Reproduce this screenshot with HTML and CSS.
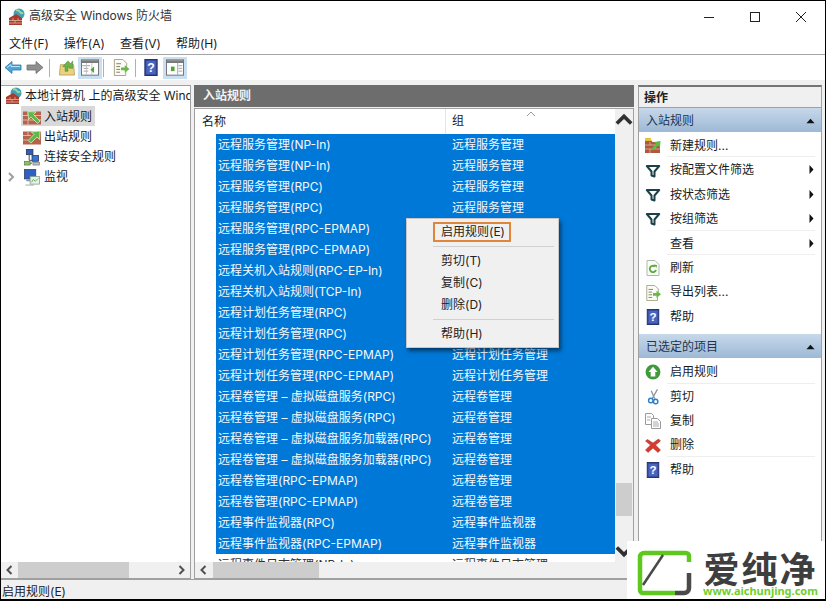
FILE: index.html
```html
<!DOCTYPE html>
<html lang="zh-CN">
<head>
<meta charset="utf-8">
<title>高级安全 Windows 防火墙</title>
<link rel="stylesheet" href="styles.css">
</head>
<body>
<svg class="sprite" width="0" height="0" aria-hidden="true">
  <defs>
    <symbol id="i-shield" viewBox="0 0 18 18">
      <circle cx="11" cy="6" r="5.5" fill="#3f9fb5"/>
      <path d="M8 2.500c2-1 3 0 4 1.500s2 1.500 3 .5" fill="none" stroke="#9fd69a" stroke-width="2"/>
      <path d="M1 10l7-4 6 4v7H1z" fill="#a83c2c"/>
      <path d="M1 12.500h13M1 15h13M5 10v2.500M10 10v2.500M7 12.500V15" stroke="#e3b5a5" stroke-width=".8" fill="none"/>
    </symbol>
    <symbol id="i-rule-in" viewBox="0 0 18 16">
      <rect x="0" y="2" width="18" height="13" fill="#b5634c"/>
      <path d="M0 6h18M0 10.500h18M5 2v4M12 6v4.500M5 10.500V15" stroke="#dcb7a2" stroke-width="1" fill="none"/>
      <path d="M14.500 14L8 7.500 5.500 10 5 2l8 .5-2.500 2.500 6.500 6.500z" fill="#5cbb45" stroke="#e8f5df" stroke-width=".7"/>
    </symbol>
    <symbol id="i-rule-out" viewBox="0 0 18 16">
      <rect x="0" y="2" width="18" height="13" fill="#b5634c"/>
      <path d="M5 11l6-6-2.500-2.500L17 1.500 16.500 10 14 7.500l-6 6z" fill="#5cbb45" stroke="#e8f5df" stroke-width=".7"/>
      <path d="M0 6h8M0 10.500h5M5 2v4" stroke="#dcb7a2" stroke-width="1" fill="none"/>
    </symbol>
    <symbol id="i-conn" viewBox="0 0 18 18">
      <rect x="3" y="0" width="7" height="6" fill="#2f5fb5" stroke="#26305f" stroke-width=".8"/>
      <rect x="9" y="7" width="7" height="6" fill="#3476d0" stroke="#26305f" stroke-width=".8"/>
      <path d="M6 6v6h3M3 15h6" stroke="#444" fill="none"/>
      <rect x="1" y="13" width="6" height="4" fill="#8ac06c" stroke="#587a3a" stroke-width=".7"/>
      <rect x="10" y="14" width="7" height="3" fill="#bcbcbc" stroke="#777" stroke-width=".7"/>
    </symbol>
    <symbol id="i-monitor" viewBox="0 0 18 18">
      <rect x="1" y="0.500" width="12" height="10" fill="#2f5fc0" stroke="#333d66" stroke-width=".8"/>
      <path d="M3 11h8v2H3z" fill="#8a93a8"/>
      <rect x="7" y="8" width="10" height="8" fill="#e7eef0" stroke="#7f9c80" stroke-width=".8"/>
      <path d="M8.500 14l2-3 2 2 3-3" fill="none" stroke="#5cab50"/>
      <path d="M2 17h9" stroke="#9aa" stroke-width="1"/>
    </symbol>
    <symbol id="i-back" viewBox="0 0 18 16">
      <path d="M1 8l7-6v3.500h9v5H8V14z" fill="#4aa6dc" stroke="#2b78a8" stroke-width=".8"/>
      <path d="M3 8l4-3v2h9" fill="none" stroke="#b7e4f7" stroke-width="1"/>
    </symbol>
    <symbol id="i-forward" viewBox="0 0 18 16">
      <path d="M17 8l-7-6v3.500H1v5h9V14z" fill="#8f8f8f" stroke="#6e6e6e" stroke-width=".8"/>
    </symbol>
    <symbol id="i-up" viewBox="0 0 18 18">
      <path d="M2 6h14l1 11H1z" fill="#ecd27e" stroke="#b09748" stroke-width=".8"/>
      <path d="M7 13V8H4.500L10 2l3 3 2-3v8l-4-.5 1-1-2-.5v5z" fill="#69b54a" stroke="#3e7a2a" stroke-width=".5"/>
    </symbol>
    <symbol id="i-pane-left" viewBox="0 0 20 18">
      <rect x=".5" y=".5" width="19" height="17" fill="#fdfdfd" stroke="#6a6a6a"/>
      <rect x="1" y="1" width="18" height="3" fill="#7a7a7a"/>
      <path d="M1 7h9M3 10h5M3 13h5" stroke="#9a9a9a"/>
      <path d="M6 4v13M12 4v13" stroke="#c2c2c2"/>
      <path d="M14.500 8v7L10.500 11.500z" fill="#4fa23a"/>
    </symbol>
    <symbol id="i-pane-right" viewBox="0 0 20 18">
      <rect x=".5" y=".5" width="19" height="17" fill="#fdfdfd" stroke="#6a6a6a"/>
      <rect x="1" y="1" width="18" height="3" fill="#7a7a7a"/>
      <path d="M13 4v13M14 7h4M14 10h4M14 13h4" stroke="#9a9a9a"/>
      <rect x="5.500" y="8" width="4" height="5" fill="#4fa23a"/>
    </symbol>
    <symbol id="i-export" viewBox="0 0 18 18">
      <path d="M2 .5h9l4 4V8h-1v9.500H2z" fill="#fbfbf5" stroke="#a49f7c"/>
      <path d="M4 5h5M4 8h4M4 11h4M4 14h4" stroke="#7a7a5c"/>
      <path d="M9 9h4V6.500L18 10.500 13 14.500V12H9z" fill="#64ba44"/>
    </symbol>
    <symbol id="i-help" viewBox="0 0 14 18">
      <rect x=".5" y=".5" width="13" height="17" fill="#33489c" stroke="#1e2c68"/>
      <rect x="2" y="2" width="10" height="14" fill="#4a64c0"/>
      <text x="7" y="14" text-anchor="middle" class="help-mark">?</text>
    </symbol>
    <symbol id="i-new" viewBox="0 0 16 16">
      <path d="M0 2h6l1.500 2H15v11H0z" fill="#b3563f"/>
      <path d="M0 7h15M0 11h15M5 4v3M10 7v4M5 11v4" stroke="#dcb7a2" stroke-width=".8"/>
      <rect x="0" y="0" width="6" height="3" fill="#e6c23c"/>
      <path d="M6 11l5-5-2-2 6.500-1L15 9.500l-2-2-5 5z" fill="#5cbb45"/>
    </symbol>
    <symbol id="i-filter" viewBox="-1 -2 16 16">
      <path d="M.8 1h12.400L8.500 6.500v5L5.500 10.500v-4z" fill="#fff" stroke="#1c4148" stroke-width="2" stroke-linejoin="round"/>
    </symbol>
    <symbol id="i-refresh" viewBox="0 0 14 16">
      <path d="M1 .5h8l4 4v11H1z" fill="#fafcf8" stroke="#aeb9a8"/>
      <path d="M10 10a3.200 3.200 0 1 1-1-3.500" fill="none" stroke="#5aa83e" stroke-width="1.800"/>
      <path d="M8 4.500l3 .5-.5 3z" fill="#5aa83e"/>
    </symbol>
    <symbol id="i-enable" viewBox="0 0 14 14">
      <circle cx="7" cy="7" r="6.500" fill="#3f9a3a"/>
      <path d="M7 2.500L11 7H9v4H5V7H3z" fill="#fff"/>
    </symbol>
    <symbol id="i-cut" viewBox="0 0 14 18">
      <path d="M12 .5L6 11M5 2l4 9" stroke="#8a96a6" stroke-width="1.500" fill="none"/>
      <circle cx="4.500" cy="13" r="2.500" fill="none" stroke="#2f7fc8" stroke-width="1.600"/>
      <circle cx="10" cy="14" r="2.500" fill="none" stroke="#2f7fc8" stroke-width="1.600"/>
    </symbol>
    <symbol id="i-copy" viewBox="0 0 16 16">
      <path d="M.5.500h6l2 2v9h-8z" fill="#fff" stroke="#9a9a9a"/>
      <path d="M6.500 5.500h6l3 3v7h-9z" fill="#fff" stroke="#9a9a9a"/>
      <path d="M2 4h4M2 7h3M8 9h5M8 11h6M8 13h6" stroke="#a8a8a8"/>
    </symbol>
    <symbol id="i-delete" viewBox="0 0 16 16">
      <path d="M2.500 2.500L8 6l5.500-4 2 2L10.500 8l5 5-2.500 2.500L8 11l-5 4.500L.5 13l5-5L.5 4z" fill="#d93a2e" stroke="#a82a20" stroke-width=".5"/>
    </symbol>
    <symbol id="i-collapse" viewBox="0 0 10 6">
      <path d="M5 .5L9.500 5.500H.5z" fill="#111"/>
    </symbol>
    <symbol id="i-more" viewBox="0 0 5 9">
      <path d="M.5 0L4.500 4.500.5 9z" fill="#111"/>
    </symbol>
    <symbol id="i-arrow-l" viewBox="0 0 8 10">
      <path d="M6 1L2 5l4 4" fill="none" stroke="#505050" stroke-width="2"/>
    </symbol>
    <symbol id="i-arrow-r" viewBox="0 0 8 10">
      <path d="M2 1l4 4-4 4" fill="none" stroke="#505050" stroke-width="2"/>
    </symbol>
    <symbol id="i-arrow-u" viewBox="0 0 10 8">
      <path d="M1 6l4-4 4 4" fill="none" stroke="#303030" stroke-width="2"/>
    </symbol>
    <symbol id="i-arrow-d" viewBox="0 0 10 8">
      <path d="M1 2l4 4 4-4" fill="none" stroke="#303030" stroke-width="2"/>
    </symbol>
  </defs>
</svg>

<div class="window">
  <header class="titlebar">
    <svg class="ico-18"><use href="#i-shield"/></svg>
    <span class="title-text">高级安全 Windows 防火墙</span>
    <div class="win-controls">
      <svg class="win-btn" viewBox="0 0 12 12"><path d="M1 6.500h10" stroke="#222" fill="none"/></svg>
      <svg class="win-btn" viewBox="0 0 12 12"><rect x="1.500" y="1.500" width="9" height="9" stroke="#222" fill="none"/></svg>
      <svg class="win-btn" viewBox="0 0 12 12"><path d="M1 1l10 10M11 1L1 11" stroke="#222" fill="none"/></svg>
    </div>
  </header>

  <nav class="menubar">
    <span>文件(F)</span><span>操作(A)</span><span>查看(V)</span><span>帮助(H)</span>
  </nav>

  <div class="toolbar">
    <svg class="tool-ico"><use href="#i-back"/></svg>
    <svg class="tool-ico tool-gap"><use href="#i-forward"/></svg>
    <i class="tool-sep"></i>
    <svg class="tool-ico"><use href="#i-up"/></svg>
    <span class="tool-on"><svg class="tool-ico"><use href="#i-pane-left"/></svg></span>
    <i class="tool-sep"></i>
    <svg class="tool-ico tool-gap"><use href="#i-export"/></svg>
    <i class="tool-sep"></i>
    <svg class="tool-ico tool-help"><use href="#i-help"/></svg>
    <span class="tool-on"><svg class="tool-ico"><use href="#i-pane-right"/></svg></span>
  </div>

  <main class="workspace">
    <section class="tree-pane">
      <div class="tree">
        <div class="tree-root"><svg class="ico-18"><use href="#i-shield"/></svg><span>本地计算机 上的高级安全 Windows 防火墙</span></div>
        <div class="tree-item is-current"><svg class="ico-18"><use href="#i-rule-in"/></svg><span>入站规则</span></div>
        <div class="tree-item"><svg class="ico-18"><use href="#i-rule-out"/></svg><span>出站规则</span></div>
        <div class="tree-item"><svg class="ico-18"><use href="#i-conn"/></svg><span>连接安全规则</span></div>
        <div class="tree-item"><svg class="tree-chevron"><use href="#i-arrow-r"/></svg><svg class="ico-18"><use href="#i-monitor"/></svg><span>监视</span></div>
      </div>
      <div class="hscroll">
        <svg class="sb-arrow"><use href="#i-arrow-l"/></svg>
        <div class="hscroll-track"><i class="hscroll-thumb tree-thumb"></i></div>
        <svg class="sb-arrow"><use href="#i-arrow-r"/></svg>
      </div>
    </section>

    <section class="list-pane">
      <h2 class="pane-title">入站规则</h2>
      <div class="list-frame">
        <div class="list-main">
          <div class="list-cols">
            <div class="list-head">
              <span class="col-name">名称</span>
              <span class="col-group">组</span>
              <svg class="sort-mark" viewBox="0 0 10 6"><path d="M1 5l4-4 4 4" fill="none" stroke="#9a9a9a"/></svg>
            </div>
            <div class="rows">
              <div class="row"><span class="col-name">远程服务管理(NP-In)</span><span class="col-group">远程服务管理</span></div>
              <div class="row"><span class="col-name">远程服务管理(NP-In)</span><span class="col-group">远程服务管理</span></div>
              <div class="row"><span class="col-name">远程服务管理(RPC)</span><span class="col-group">远程服务管理</span></div>
              <div class="row"><span class="col-name">远程服务管理(RPC)</span><span class="col-group">远程服务管理</span></div>
              <div class="row"><span class="col-name">远程服务管理(RPC-EPMAP)</span><span class="col-group">远程服务管理</span></div>
              <div class="row"><span class="col-name">远程服务管理(RPC-EPMAP)</span><span class="col-group">远程服务管理</span></div>
              <div class="row"><span class="col-name">远程关机入站规则(RPC-EP-In)</span><span class="col-group">远程关机</span></div>
              <div class="row"><span class="col-name">远程关机入站规则(TCP-In)</span><span class="col-group">远程关机</span></div>
              <div class="row"><span class="col-name">远程计划任务管理(RPC)</span><span class="col-group">远程计划任务管理</span></div>
              <div class="row"><span class="col-name">远程计划任务管理(RPC)</span><span class="col-group">远程计划任务管理</span></div>
              <div class="row"><span class="col-name">远程计划任务管理(RPC-EPMAP)</span><span class="col-group">远程计划任务管理</span></div>
              <div class="row"><span class="col-name">远程计划任务管理(RPC-EPMAP)</span><span class="col-group">远程计划任务管理</span></div>
              <div class="row"><span class="col-name">远程卷管理 – 虚拟磁盘服务(RPC)</span><span class="col-group">远程卷管理</span></div>
              <div class="row"><span class="col-name">远程卷管理 – 虚拟磁盘服务(RPC)</span><span class="col-group">远程卷管理</span></div>
              <div class="row"><span class="col-name">远程卷管理 – 虚拟磁盘服务加载器(RPC)</span><span class="col-group">远程卷管理</span></div>
              <div class="row"><span class="col-name">远程卷管理 – 虚拟磁盘服务加载器(RPC)</span><span class="col-group">远程卷管理</span></div>
              <div class="row"><span class="col-name">远程卷管理(RPC-EPMAP)</span><span class="col-group">远程卷管理</span></div>
              <div class="row"><span class="col-name">远程卷管理(RPC-EPMAP)</span><span class="col-group">远程卷管理</span></div>
              <div class="row"><span class="col-name">远程事件监视器(RPC)</span><span class="col-group">远程事件监视器</span></div>
              <div class="row"><span class="col-name">远程事件监视器(RPC-EPMAP)</span><span class="col-group">远程事件监视器</span></div>
              <div class="row is-plain"><span class="col-name">远程事件日志管理(NP-In)</span><span class="col-group">远程事件日志管理</span></div>
            </div>
          </div>
          <div class="vscroll">
            <svg class="sb-arrow-v"><use href="#i-arrow-u"/></svg>
            <div class="vscroll-track"><i class="vscroll-thumb"></i></div>
            <svg class="sb-arrow-v"><use href="#i-arrow-d"/></svg>
          </div>
        </div>
        <div class="hscroll">
          <svg class="sb-arrow"><use href="#i-arrow-l"/></svg>
          <div class="hscroll-track"><i class="hscroll-thumb list-thumb"></i></div>
        </div>
      </div>

      <ul class="context-menu">
        <li class="menu-first"><span class="menu-focus">启用规则(E)</span></li>
        <li class="menu-line"></li>
        <li>剪切(T)</li>
        <li>复制(C)</li>
        <li>删除(D)</li>
        <li class="menu-line"></li>
        <li>帮助(H)</li>
      </ul>
    </section>

    <aside class="action-pane">
      <h2 class="action-title">操作</h2>
      <div class="action-head"><span>入站规则</span><svg class="collapse"><use href="#i-collapse"/></svg></div>
      <ul class="action-list">
        <li class="rule"><svg class="a-ico"><use href="#i-new"/></svg><span>新建规则...</span></li>
        <li><svg class="a-ico"><use href="#i-filter"/></svg><span>按配置文件筛选</span><svg class="more"><use href="#i-more"/></svg></li>
        <li><svg class="a-ico"><use href="#i-filter"/></svg><span>按状态筛选</span><svg class="more"><use href="#i-more"/></svg></li>
        <li class="rule"><svg class="a-ico"><use href="#i-filter"/></svg><span>按组筛选</span><svg class="more"><use href="#i-more"/></svg></li>
        <li class="rule"><i class="a-ico"></i><span>查看</span><svg class="more"><use href="#i-more"/></svg></li>
        <li><svg class="a-ico"><use href="#i-refresh"/></svg><span>刷新</span></li>
        <li><svg class="a-ico"><use href="#i-export"/></svg><span>导出列表...</span></li>
        <li><svg class="a-ico"><use href="#i-help"/></svg><span>帮助</span></li>
      </ul>
      <div class="action-head second"><span>已选定的项目</span><svg class="collapse"><use href="#i-collapse"/></svg></div>
      <ul class="action-list">
        <li class="rule"><svg class="a-ico"><use href="#i-enable"/></svg><span>启用规则</span></li>
        <li><svg class="a-ico"><use href="#i-cut"/></svg><span>剪切</span></li>
        <li><svg class="a-ico"><use href="#i-copy"/></svg><span>复制</span></li>
        <li class="rule"><svg class="a-ico"><use href="#i-delete"/></svg><span>删除</span></li>
        <li><svg class="a-ico"><use href="#i-help"/></svg><span>帮助</span></li>
      </ul>
    </aside>
  </main>

  <footer class="statusbar">启用规则(E)</footer>

  <div class="brand">
    <svg class="brand-mark" viewBox="0 0 56 46">
      <path d="M52 12V6a3 3 0 0 0-3-3H7a4 4 0 0 0-4 4v33a3 3 0 0 0 3 3h32" fill="none" stroke="#5fc81e" stroke-width="4.500"/>
      <path d="M6 35L26 5" stroke="#4a4a4a" stroke-width="2.500"/>
      <path d="M52 23v15a5 5 0 0 1-5 5h-9" fill="none" stroke="#4a4a4a" stroke-width="4.500"/>
    </svg>
    <div class="brand-text">
      <b class="brand-name">爱纯净</b>
      <span class="brand-url">www.aichunjing.com</span>
    </div>
  </div>
</div>
</body>
</html>
```

FILE: styles.css
```css
* { box-sizing: border-box; }

html, body { margin: 0; padding: 0; }

body {
  width: 826px;
  height: 601px;
  overflow: hidden;
  font: 12px/1.2 "Inter", "Noto Sans CJK SC", sans-serif;
  color: #1a1a1a;
  background: #fff;
}

.sprite { position: absolute; }

svg { display: block; flex: none; }

.help-mark { font: bold 13px "Liberation Sans", sans-serif; fill: #fff; }

.window {
  position: relative;
  width: 826px;
  height: 601px;
  border: 1px solid #000;
  border-bottom-width: 2px;
  display: flex;
  flex-direction: column;
  background: #fff;
  overflow: hidden;
}

/* title bar */
.titlebar {
  height: 30px;
  padding-top: 1px;
  flex: none;
  display: flex;
  align-items: center;
  padding-left: 7px;
  gap: 3px;
  color: #333;
}
.ico-18 { width: 18px; height: 18px; }
.win-controls {
  margin-left: auto;
  display: flex;
  gap: 34px;
  padding-right: 18px;
}
.win-btn { width: 12px; height: 12px; }

/* menu bar */
.menubar {
  height: 24px;
  flex: none;
  display: flex;
  align-items: center;
  gap: 15px;
  padding: 3px 0 0 8px;
  border-bottom: 1px solid #a5a5a5;
}

/* toolbar */
.toolbar {
  height: 25px;
  flex: none;
  display: flex;
  align-items: center;
  padding-left: 1px;
  background: #fff;
}
.tool-ico { width: 18px; height: 17px; }
.toolbar > .tool-ico { margin: 0 2px; }
.toolbar > .tool-gap { margin-right: 4px; }
.toolbar > .tool-help { width: 14px; margin-right: 5px; }
.tool-sep {
  width: 1px;
  height: 18px;
  margin: 0 6px 0 1px;
  background: #b0b0b0;
}
.tool-on {
  display: flex;
  align-items: center;
  justify-content: center;
  width: 24px;
  height: 22px;
  background: #c9e0f3;
}

/* three panes */
.workspace {
  flex: 1;
  min-height: 0;
  display: grid;
  grid-template-columns: 190px 440px 185px;
  column-gap: 3px;
  padding-top: 5px;
  background: #f0f0f0;
}
.tree-pane, .list-frame, .action-pane { background: #fff; }

.tree-pane {
  display: flex;
  flex-direction: column;
  border: 1px solid #a0a0a0;
  border-left: 0;
  min-height: 0;
}
.tree { flex: 1; overflow: hidden; }
.tree-root {
  display: flex;
  align-items: center;
  gap: 2px;
  height: 20px;
  padding-left: 4px;
  white-space: nowrap;
}
.tree-item {
  position: relative;
  display: flex;
  align-items: center;
  gap: 3px;
  height: 20px;
  width: fit-content;
  padding: 2px 3px 0 22px;
  white-space: nowrap;
}
.tree-item .ico-18 { width: 18px; height: 17px; }
.is-current { background: #d9d9d9; margin-left: 20px; padding-left: 2px; }
.tree-chevron {
  position: absolute;
  left: 6px;
  top: 6px;
  width: 8px;
  height: 10px;
  opacity: .55;
}

/* horizontal scrollbars */
.hscroll {
  flex: none;
  height: 16px;
  display: flex;
  align-items: center;
  background: #f0f0f0;
}
.sb-arrow { width: 17px; height: 10px; flex: none; }
.hscroll-track { flex: 1; height: 100%; }
.hscroll-thumb { display: block; height: 100%; background: #cdcdcd; }
.tree-thumb { width: 111px; }
.list-thumb { width: 106px; margin-left: 1px; }

/* centre list */
.list-pane {
  position: relative;
  display: flex;
  flex-direction: column;
  min-height: 0;
}
.pane-title {
  flex: none;
  height: 22px;
  margin: 0 0 1px;
  padding-left: 9px;
  font-size: 12px;
  line-height: 22px;
  font-weight: 700;
  color: #f2f2f2;
  background: #6d6d6d;
}
.list-frame {
  flex: 1;
  min-height: 0;
  display: flex;
  flex-direction: column;
  border: 1px solid #a0a0a0;
}
.list-main { flex: 1; min-height: 0; display: flex; }
.list-cols { flex: 1; min-width: 0; display: flex; flex-direction: column; }
.list-head {
  position: relative;
  flex: none;
  height: 25px;
  display: flex;
  align-items: center;
  padding-left: 7px;
}
.list-head .col-name {
  width: 244px;
  height: 100%;
  line-height: 25px;
  border-right: 1px solid #e5e5e5;
}
.list-head .col-group { padding-left: 6px; }
.sort-mark {
  position: absolute;
  left: 331px;
  top: 2px;
  width: 10px;
  height: 6px;
}
.rows { flex: 1; min-height: 0; overflow: hidden; padding-left: 21px; }
.row {
  height: 21px;
  display: flex;
  align-items: center;
  white-space: nowrap;
  padding: 2px 0 0 2px;
  background: #0078d7;
  color: #f4f9fd;
}
.row .col-name { width: 234px; }
.is-plain { background: #fff; color: #333; }

/* vertical scrollbar */
.vscroll {
  flex: none;
  width: 18px;
  display: flex;
  flex-direction: column;
  background: #f0f0f0;
}
.sb-arrow-v { flex: none; width: 100%; height: 22px; }
.vscroll-track { flex: 1; position: relative; }
.vscroll-thumb {
  position: absolute;
  left: 1px;
  right: 1px;
  bottom: 24px;
  height: 33px;
  background: #cdcdcd;
}

/* context menu */
.context-menu {
  position: absolute;
  left: 212px;
  top: 133px;
  width: 153px;
  height: 130px;
  margin: 0;
  padding: 3px 0 0 34px;
  list-style: none;
  background: #f0f0f0;
  border: 1px solid #c8c8c8;
  box-shadow: 2px 3px 4px rgba(0, 0, 0, .5);
  color: #222;
}
.context-menu li { height: 22px; line-height: 24px; }
.context-menu .menu-first { height: 20px; margin: 0 0 0 -8px; line-height: 16px; }
.menu-focus {
  display: block;
  width: 78px;
  height: 20px;
  padding-left: 6px;
  border: 2px solid #e0863a;
}
.context-menu .menu-line {
  height: 1px;
  margin: 4px 4px 2px -8px;
  background: #d0d0d0;
}

/* action pane */
.action-pane {
  margin-left: 1px;
  border: 1px solid #a0a0a0;
  border-top: 2px solid #757575;
  min-height: 0;
  overflow: hidden;
}
.action-title {
  margin: 0;
  height: 21px;
  padding-left: 5px;
  font-size: 12px;
  line-height: 21px;
  font-weight: 700;
  color: #222;
  background: #f0f0f0;
  border-bottom: 1px solid #a0a0a0;
}
.action-head {
  height: 24px;
  display: flex;
  align-items: center;
  justify-content: space-between;
  padding: 2px 6px 0 7px;
  color: #26344a;
  background: linear-gradient(#c7d8ea, #9db9d6);
}
.action-head.second { margin-top: 6px; }
.collapse { width: 9px; height: 6px; }
.action-list { margin: 0; padding: 1px 0 0; list-style: none; }
.action-list li {
  position: relative;
  height: 24.4px;
  display: flex;
  align-items: center;
  padding: 2px 0 0 6px;
}
.action-list .rule::after {
  content: "";
  position: absolute;
  left: 28px;
  right: 6px;
  bottom: 0;
  height: 1px;
  background: #eeeeee;
}
.a-ico { width: 16px; height: 16px; margin-right: 9px; display: block; flex: none; }
.more {
  position: absolute;
  right: 7px;
  top: 8px;
  width: 5px;
  height: 9px;
}

/* status bar */
.statusbar {
  height: 20px;
  flex: none;
  line-height: 23px;
  background: #f0f0f0;
  border-top: 1px solid #a0a0a0;
  padding-left: 1px;
  color: #222;
}

/* site mark in the corner */
.brand {
  position: absolute;
  right: -1px;
  bottom: -2px;
  width: 199px;
  height: 60px;
  background: #fff;
  display: flex;
  align-items: center;
  padding: 3px 0 0 10px;
  gap: 10px;
}
.brand-mark { width: 56px; height: 46px; }
.brand-text { display: flex; flex-direction: column; align-items: center; }
.brand-name {
  font: 700 36px/36px "Noto Sans CJK SC", sans-serif;
  color: #3e3e3e;
  letter-spacing: 2px;
}
.brand-url {
  font: 700 11px/12px "Noto Sans", sans-serif;
  color: #6fcf2a;
}
```
